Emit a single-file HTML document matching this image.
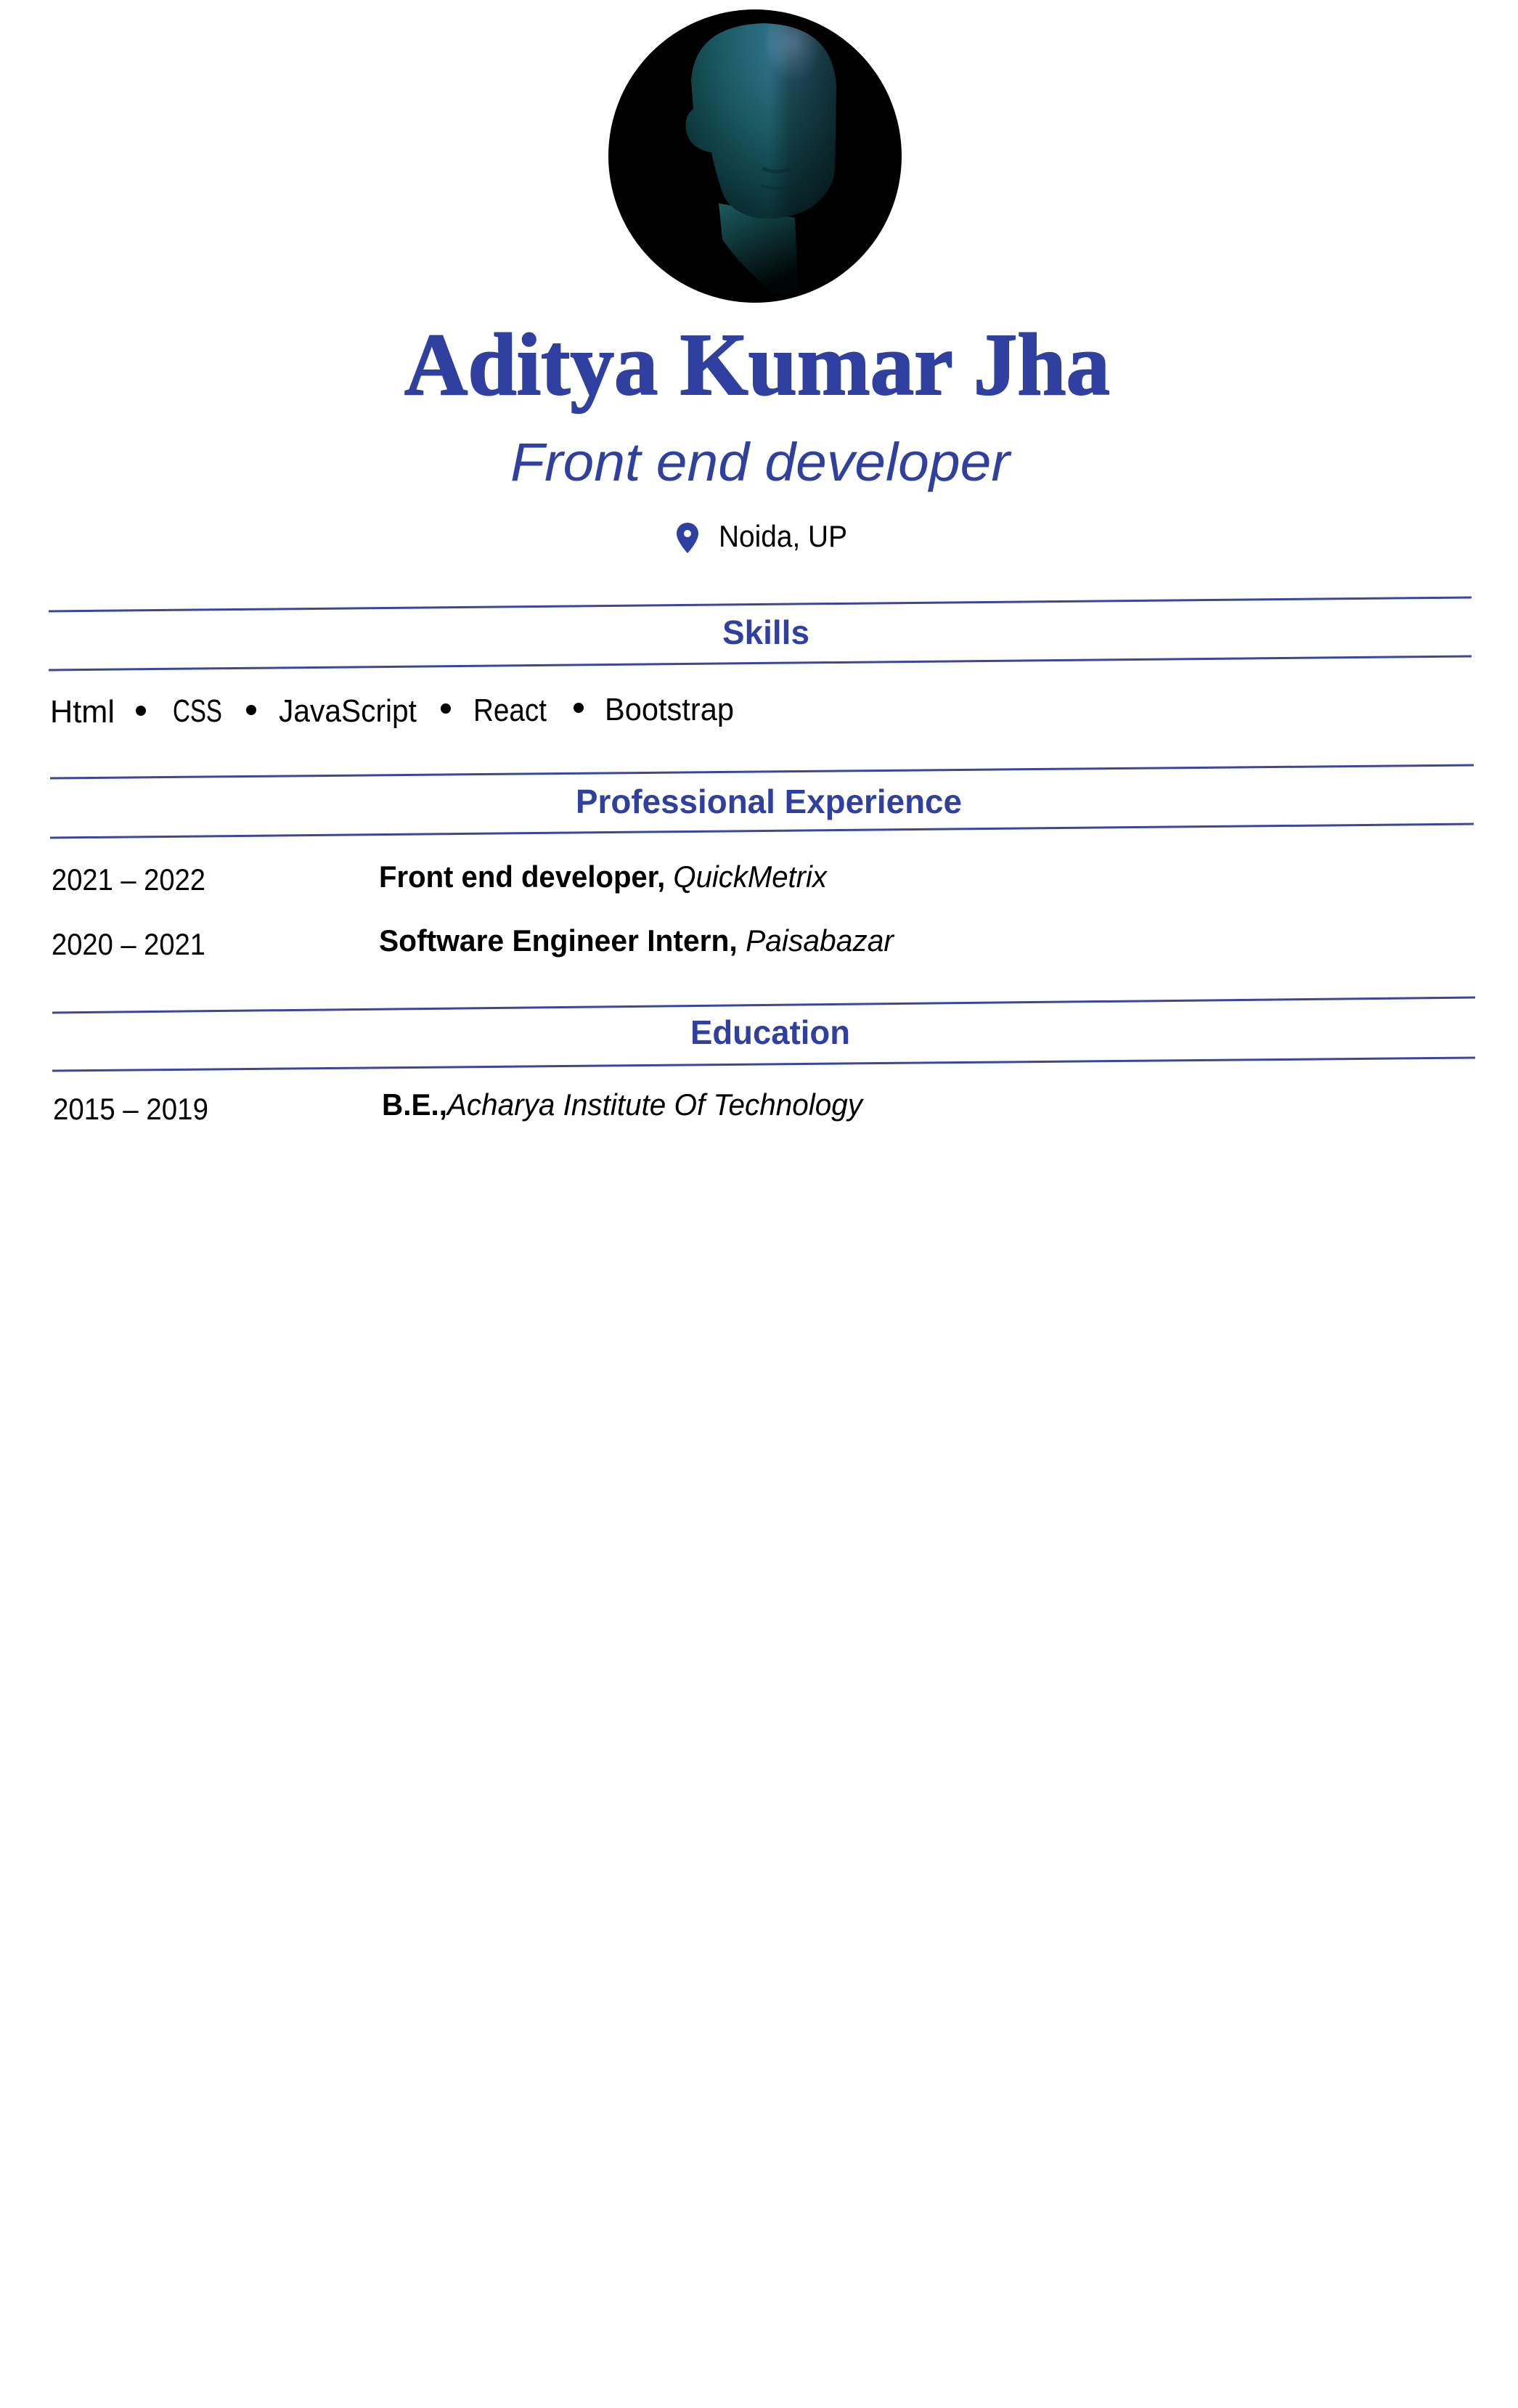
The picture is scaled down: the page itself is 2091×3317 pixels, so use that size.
<!DOCTYPE html>
<html><head><meta charset="utf-8"><style>
html,body{margin:0;padding:0;background:#fff;}
svg{display:block;}
.s{font-family:"Liberation Sans",sans-serif;}
</style></head><body>
<svg width="2091" height="3317" viewBox="0 0 2091 3317" xmlns="http://www.w3.org/2000/svg">
<defs>
<clipPath id="c"><circle cx="1040" cy="215" r="202"/></clipPath>
<radialGradient id="skull" cx="0.72" cy="0.1" r="0.9">
<stop offset="0" stop-color="#78aed0"/><stop offset="0.22" stop-color="#2d6d84"/><stop offset="0.55" stop-color="#1a5a62"/><stop offset="1" stop-color="#0b3034"/></radialGradient>
<linearGradient id="shade" x1="0" y1="0" x2="1" y2="0">
<stop offset="0" stop-color="#000" stop-opacity="0"/><stop offset="0.55" stop-color="#000" stop-opacity="0"/><stop offset="0.7" stop-color="#000" stop-opacity="0.35"/><stop offset="1" stop-color="#000" stop-opacity="0.55"/></linearGradient>
<linearGradient id="neck" x1="0" y1="0" x2="0.4" y2="1">
<stop offset="0" stop-color="#1a5c60"/><stop offset="1" stop-color="#010505"/></linearGradient>
</defs>
<circle cx="1040" cy="215" r="202" fill="#000"/>
<g clip-path="url(#c)">
<path d="M990 280 L995 330 Q1020 365 1065 405 L1100 405 L1095 300 Z" fill="url(#neck)"/>
<path d="M952 110 Q958 35 1052 32 Q1148 35 1152 120 L1150 235 Q1145 270 1110 290 Q1075 305 1040 300 Q1005 292 995 265 Q985 235 980 210 Q950 205 945 180 Q942 160 955 150 Z" fill="url(#skull)"/>
<path d="M952 110 Q958 35 1052 32 Q1148 35 1152 120 L1150 235 Q1145 270 1110 290 Q1075 305 1040 300 Q1005 292 995 265 Q985 235 980 210 Q950 205 945 180 Q942 160 955 150 Z" fill="url(#shade)"/>
<path d="M1050 232 Q1068 240 1088 233" stroke="#0b2a2e" stroke-width="5" fill="none" opacity="0.6"/>
<path d="M1048 256 Q1066 262 1090 257" stroke="#0b2a2e" stroke-width="4" fill="none" opacity="0.5"/>
</g>
<text x="557" y="543" font-family="'Liberation Serif',serif" font-weight="bold" font-size="122" fill="#2f40a0" stroke="#2f40a0" stroke-width="2" textLength="972" lengthAdjust="spacingAndGlyphs">Aditya Kumar Jha</text>
<text x="703" y="662" class="s" font-style="italic" font-size="74" fill="#2f40a0" textLength="688" lengthAdjust="spacingAndGlyphs">Front end developer</text>
<path d="M947 720 C938 720 932 727 932 735 C932 746 947 762 947 762 C947 762 962 746 962 735 C962 727 956 720 947 720 Z" fill="#2f40a0"/>
<circle cx="947" cy="735" r="5" fill="#fff"/>
<text x="990" y="753" class="s" font-size="42" fill="#000" textLength="177" lengthAdjust="spacingAndGlyphs">Noida, UP</text>
<g stroke="#3a479d" stroke-width="3">
<line x1="67" y1="842" x2="2027" y2="823"/>
<line x1="67" y1="923" x2="2027" y2="904"/>
<line x1="69" y1="1072" x2="2030" y2="1054"/>
<line x1="69" y1="1154" x2="2030" y2="1135"/>
<line x1="72" y1="1395" x2="2032" y2="1374"/>
<line x1="72" y1="1475" x2="2032" y2="1457"/>
</g>
<text x="995" y="887" class="s" font-weight="bold" font-size="46" fill="#2f40a0" textLength="120" lengthAdjust="spacingAndGlyphs">Skills</text>
<g class="s" font-size="44" fill="#000">
<text x="69" y="995" textLength="89" lengthAdjust="spacingAndGlyphs">Html</text>
<text x="238" y="994" textLength="68" lengthAdjust="spacingAndGlyphs">CSS</text>
<text x="384" y="994" textLength="190" lengthAdjust="spacingAndGlyphs">JavaScript</text>
<text x="652" y="993" textLength="101" lengthAdjust="spacingAndGlyphs">React</text>
<text x="833" y="992" textLength="178" lengthAdjust="spacingAndGlyphs">Bootstrap</text>
</g>
<g fill="#000"><circle cx="194" cy="979" r="7"/><circle cx="346" cy="978" r="7"/><circle cx="614" cy="976" r="7"/><circle cx="797" cy="975" r="7"/></g>
<text x="793" y="1120" class="s" font-weight="bold" font-size="46" fill="#2f40a0" textLength="532" lengthAdjust="spacingAndGlyphs">Professional Experience</text>
<g class="s" font-size="42" fill="#000">
<text x="71" y="1226" textLength="212" lengthAdjust="spacingAndGlyphs">2021 – 2022</text>
<text x="522" y="1222" textLength="617" lengthAdjust="spacingAndGlyphs"><tspan font-weight="bold">Front end developer,</tspan> <tspan font-style="italic">QuickMetrix</tspan></text>
<text x="71" y="1315" textLength="212" lengthAdjust="spacingAndGlyphs">2020 – 2021</text>
<text x="522" y="1310" textLength="709" lengthAdjust="spacingAndGlyphs"><tspan font-weight="bold">Software Engineer Intern,</tspan> <tspan font-style="italic">Paisabazar</tspan></text>
</g>
<text x="951" y="1438" class="s" font-weight="bold" font-size="46" fill="#2f40a0" textLength="220" lengthAdjust="spacingAndGlyphs">Education</text>
<g class="s" font-size="42" fill="#000">
<text x="73" y="1542" textLength="214" lengthAdjust="spacingAndGlyphs">2015 – 2019</text>
<text x="526" y="1536" textLength="662" lengthAdjust="spacingAndGlyphs"><tspan font-weight="bold">B.E.,</tspan><tspan font-style="italic">Acharya Institute Of Technology</tspan></text>
</g>
</svg>
</body></html>
